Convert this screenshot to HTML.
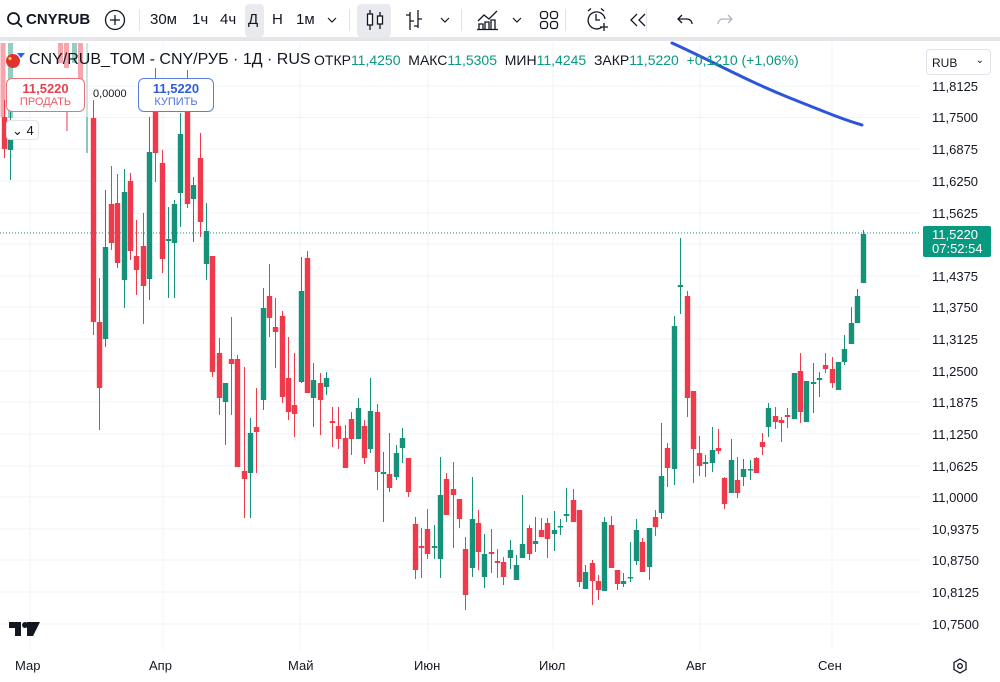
<!DOCTYPE html>
<html><head><meta charset="utf-8">
<style>
*{margin:0;padding:0;box-sizing:border-box}
body{width:1000px;height:682px;overflow:hidden;background:#fff;font-family:"Liberation Sans",sans-serif;color:#131722;position:relative}
.tb{position:absolute;left:0;top:0;width:1000px;height:41px;background:#fff;border-bottom:4px solid #e4e6ea}
.t{position:absolute;top:11px;font-size:15px;color:#131722}
.sep{position:absolute;top:9px;width:1px;height:22px;background:#e0e3eb}
.ax{position:absolute;left:932px;font-size:13px;color:#131722}
.mo{position:absolute;top:658px;font-size:13px;color:#131722}
.lg{position:absolute;top:52px;font-size:14px}
.gr{color:#089981}
</style></head><body>
<svg width="1000" height="682" style="position:absolute;left:0;top:0">
<g stroke="#f0f3fa" stroke-width="1">
<line x1="0" x2="920" y1="86" y2="86"/><line x1="0" x2="920" y1="117.5" y2="117.5"/><line x1="0" x2="920" y1="149" y2="149"/><line x1="0" x2="920" y1="181" y2="181"/><line x1="0" x2="920" y1="213" y2="213"/><line x1="0" x2="920" y1="244" y2="244"/><line x1="0" x2="920" y1="276" y2="276"/><line x1="0" x2="920" y1="307" y2="307"/><line x1="0" x2="920" y1="339" y2="339"/><line x1="0" x2="920" y1="371" y2="371"/><line x1="0" x2="920" y1="402" y2="402"/><line x1="0" x2="920" y1="434" y2="434"/><line x1="0" x2="920" y1="466" y2="466"/><line x1="0" x2="920" y1="497" y2="497"/><line x1="0" x2="920" y1="529" y2="529"/><line x1="0" x2="920" y1="560" y2="560"/><line x1="0" x2="920" y1="592" y2="592"/><line x1="0" x2="920" y1="624" y2="624"/>
<line x1="30" x2="30" y1="42" y2="650"/><line x1="163" x2="163" y1="42" y2="650"/><line x1="300" x2="300" y1="42" y2="650"/><line x1="428" x2="428" y1="42" y2="650"/><line x1="553" x2="553" y1="42" y2="650"/><line x1="700" x2="700" y1="42" y2="650"/><line x1="832" x2="832" y1="42" y2="650"/>
</g>
<line x1="0" x2="920" y1="233" y2="233" stroke="#089981" stroke-width="1" stroke-dasharray="1 2"/>
<path d="M672 43 C710 60 745 80 790 98 S845 120 862 125" fill="none" stroke="#2d55dc" stroke-width="3" stroke-linecap="round"/>
<g opacity=".45">
<rect x="0.5" y="43" width="5" height="74" fill="#ef3a4c"/>
<rect x="8" y="43" width="5" height="75" fill="#17927a"/>
<rect x="58" y="43" width="5" height="20" fill="#ef3a4c"/><rect x="64" y="43" width="5" height="25" fill="#ef3a4c"/>
<rect x="72" y="43" width="5" height="20" fill="#17927a"/><rect x="78" y="43" width="5" height="40" fill="#ef3a4c"/>
<line x1="87" x2="87" y1="43" y2="117" stroke="#17927a"/>
</g>
<line x1="67" x2="67" y1="110" y2="131" stroke="#ef3a4c"/>
<line x1="87" x2="87" y1="117" y2="153" stroke="#17927a"/>
</svg>
<svg width="1000" height="682" style="position:absolute;left:0;top:0" id="cs"></svg>
<script>
var d=[[4,117,149,100,158,0],[10,125,150,95,180,1],[93,118,322,100,335,0],[99,322,388,278,430,0],[105,247,339,190,347,1],[111,204,243,166,250,0],[117,203,263,174,268,0],[124,192,280,169,308,1],[130,181,251,173,260,0],[136,256,270,220,295,0],[143,246,286,213,324,0],[149,152,279,117,300,1],[155,100,153,68,182,0],[162,163,259,150,273,0],[168,239,241,207,298,1],[174,204,243,200,298,1],[180,134,193,113,227,1],[187,100,204,70,208,0],[193,185,199,177,242,1],[200,158,222,133,237,0],[206,231,264,203,280,1],[212,256,372,256,377,0],[219,353,398,338,415,0],[225,383,402,383,445,1],[231,359,364,317,415,0],[237,359,467,355,467,0],[244,471,479,367,518,0],[250,433,473,418,518,1],[256,427,432,388,473,0],[263,308,400,288,410,1],[269,296,318,264,337,0],[275,327,332,298,368,0],[282,316,397,311,403,0],[288,378,412,337,420,0],[294,405,414,353,437,0],[301,291,382,257,383,1],[307,258,393,251,393,0],[313,380,398,363,427,1],[320,383,400,373,435,0],[326,378,387,372,395,1],[332,421,423,407,447,0],[338,426,439,407,449,0],[345,438,468,425,468,0],[351,419,439,412,455,0],[358,408,439,398,439,1],[364,426,458,420,464,0],[370,411,449,378,453,1],[377,412,472,404,490,0],[383,472,474,452,522,1],[389,474,488,433,492,0],[396,453,477,445,480,1],[402,438,448,428,463,1],[408,458,492,458,497,0],[415,524,570,517,579,0],[421,546,548,528,578,0],[427,529,554,509,559,0],[434,546,548,525,559,1],[440,495,559,457,578,1],[446,479,515,473,515,0],[453,489,495,462,548,0],[459,499,519,499,528,0],[465,549,595,537,610,0],[472,519,568,477,577,1],[478,523,552,510,570,0],[484,554,577,534,588,1],[491,552,554,529,573,0],[497,561,563,549,578,0],[503,562,577,557,585,0],[510,550,558,540,569,1],[516,565,580,555,580,1],[522,544,558,495,558,1],[529,528,554,525,560,0],[535,541,544,517,552,1],[541,530,537,518,537,0],[547,523,539,518,558,0],[554,530,534,511,551,1],[560,526,527,519,535,1],[566,514,516,488,522,1],[573,500,522,489,522,0],[579,510,582,510,587,0],[585,572,589,565,589,1],[592,563,581,560,605,0],[598,581,590,575,600,0],[604,522,591,517,591,1],[611,525,568,516,568,0],[617,570,584,570,590,0],[623,581,584,573,587,1],[630,577,578,542,582,1],[636,530,561,519,565,1],[642,542,572,538,572,0],[649,528,567,528,580,1],[655,517,527,510,536,0],[661,476,513,423,519,1],[667,448,468,443,487,0],[674,326,469,316,485,1],[680,285,287,238,314,1],[687,296,398,291,417,0],[693,391,449,391,483,0],[699,453,466,436,476,0],[705,462,464,455,477,1],[712,450,463,427,472,1],[718,448,451,429,454,0],[724,478,504,477,509,0],[731,460,493,439,493,1],[737,480,493,457,498,0],[743,469,477,459,486,1],[750,469,470,460,480,1],[756,458,473,457,473,0],[762,442,447,433,455,0],[768,408,427,403,437,1],[775,416,422,407,429,0],[781,420,423,417,442,0],[787,415,417,408,428,0],[794,373,419,373,419,1],[800,371,412,353,423,0],[806,381,422,381,422,1],[813,382,384,363,413,1],[819,378,380,372,397,1],[825,365,369,353,373,0],[832,369,383,357,388,0],[838,362,390,362,390,1],[844,349,362,335,365,1],[851,323,344,307,344,1],[857,296,323,289,323,1],[863,234,283,230,283,1]];
var s='';d.forEach(function(c){var col=c[5]?'#17927a':'#ef3a4c';var h=Math.max(1.5,c[2]-c[1]);s+='<line x1="'+(c[0]+.5)+'" x2="'+(c[0]+.5)+'" y1="'+c[3]+'" y2="'+c[4]+'" stroke="'+col+'" stroke-width="1"/><rect x="'+(c[0]-2.2)+'" y="'+c[1]+'" width="5.4" height="'+h+'" fill="'+col+'"/>';});
document.getElementById('cs').innerHTML=s;
</script>

<div class="tb">
<svg width="18" height="18" style="position:absolute;left:6px;top:11px" viewBox="0 0 18 18"><circle cx="7.5" cy="7.5" r="5.5" fill="none" stroke="#131722" stroke-width="1.8"/><line x1="11.5" y1="11.5" x2="16" y2="16" stroke="#131722" stroke-width="1.8"/></svg>
<div class="t" style="left:26px;font-weight:bold;font-size:15px">CNYRUB</div>
<svg width="22" height="22" style="position:absolute;left:104px;top:9px"><circle cx="11" cy="11" r="9.5" fill="none" stroke="#131722" stroke-width="1.3"/><path d="M11 6v10M6 11h10" stroke="#131722" stroke-width="1.3"/></svg>
<div class="sep" style="left:139px"></div>
<div class="t" style="left:150px">30м</div>
<div class="t" style="left:192px">1ч</div>
<div class="t" style="left:220px">4ч</div>
<div style="position:absolute;left:245px;top:4px;width:19px;height:33px;background:#e8eaed;border-radius:4px"></div>
<div class="t" style="left:248px">Д</div>
<div class="t" style="left:272px">Н</div>
<div class="t" style="left:296px">1м</div>
<svg width="10" height="8" style="position:absolute;left:327px;top:16px"><path d="M1 2l4 4 4-4" fill="none" stroke="#131722" stroke-width="1.2"/></svg>
<div class="sep" style="left:349px"></div>
<div style="position:absolute;left:357px;top:4px;width:34px;height:33px;background:#e8eaed;border-radius:4px"></div>
<svg width="20" height="22" style="position:absolute;left:365px;top:9px"><path d="M5 1v20M15 3v17" stroke="#131722" stroke-width="1.3"/><rect x="2.5" y="5" width="5" height="11" fill="#fff" stroke="#131722" stroke-width="1.3"/><rect x="12.5" y="7" width="5" height="8" fill="#fff" stroke="#131722" stroke-width="1.3"/></svg>
<svg width="20" height="22" style="position:absolute;left:404px;top:9px"><path d="M6 3v18M6 6H2M6 12h4M14 1v18M14 10h4M14 17h-4" fill="none" stroke="#131722" stroke-width="1.3"/></svg>
<svg width="10" height="8" style="position:absolute;left:440px;top:16px"><path d="M1 2l4 4 4-4" fill="none" stroke="#131722" stroke-width="1.2"/></svg>
<div class="sep" style="left:461px"></div>
<svg width="24" height="22" style="position:absolute;left:476px;top:9px"><path d="M2 12l6-6 5 4 8-8" fill="none" stroke="#131722" stroke-width="1.3"/><path d="M3 20v-5h4v5M9 20v-7h4v7M15 20v-9h4v9M1 20.5h21" fill="none" stroke="#131722" stroke-width="1.3"/></svg>
<svg width="10" height="8" style="position:absolute;left:512px;top:16px"><path d="M1 2l4 4 4-4" fill="none" stroke="#131722" stroke-width="1.2"/></svg>
<svg width="20" height="20" style="position:absolute;left:539px;top:10px"><rect x="1.5" y="1.5" width="7" height="7" rx="2.5" fill="none" stroke="#131722" stroke-width="1.3"/><rect x="11.5" y="1.5" width="7" height="7" rx="2.5" fill="none" stroke="#131722" stroke-width="1.3"/><rect x="1.5" y="11.5" width="7" height="7" rx="2.5" fill="none" stroke="#131722" stroke-width="1.3"/><rect x="11.5" y="11.5" width="7" height="7" rx="2.5" fill="none" stroke="#131722" stroke-width="1.3"/></svg>
<div class="sep" style="left:565px"></div>
<svg width="24" height="26" style="position:absolute;left:585px;top:7px"><path d="M17 20A8.5 8.5 0 1 1 20 12" fill="none" stroke="#131722" stroke-width="1.3"/><path d="M11 7v6h4M3 4l3-2.5M19 4l-3-2.5M19 16v8M15 20h8" fill="none" stroke="#131722" stroke-width="1.3"/></svg>
<svg width="20" height="16" style="position:absolute;left:628px;top:12px"><path d="M9 2L3 8l6 6M17 2l-6 6 6 6" fill="none" stroke="#131722" stroke-width="1.3"/></svg>
<div class="sep" style="left:646px"></div>
<svg width="18" height="14" style="position:absolute;left:676px;top:13px"><path d="M6 2L2 6l4 4M2 6h9a5 5 0 0 1 5 5" fill="none" stroke="#131722" stroke-width="1.3"/></svg>
<svg width="18" height="14" style="position:absolute;left:716px;top:13px"><path d="M12 2l4 4-4 4M16 6H7a5 5 0 0 0-5 5" fill="none" stroke="#b2b5be" stroke-width="1.3"/></svg>
</div>

<svg width="22" height="18" style="position:absolute;left:4px;top:51px"><circle cx="9" cy="10" r="7" fill="#e0332d"/><circle cx="6" cy="7.5" r="1.5" fill="#ffdd33"/><path d="M13 2h8l-4 5z" fill="#2962ff"/></svg>
<div style="position:absolute;left:29px;top:51px;font-size:16px;color:#131722">CNY/RUB_TOM - CNY/РУБ · 1Д · RUS</div>
<div class="lg" style="left:314px">ОТКР<span class="gr">11,4250</span>&nbsp; МАКС<span class="gr">11,5305</span>&nbsp; МИН<span class="gr">11,4245</span>&nbsp; ЗАКР<span class="gr">11,5220</span>&nbsp; <span class="gr">+0,1210 (+1,06%)</span></div>

<div style="position:absolute;left:6px;top:78px;width:79px;height:34px;border:1px solid #e8707a;border-radius:6px;background:#fff;text-align:center;color:#e8404f">
<div style="font-size:13px;font-weight:bold;margin-top:2px">11,5220</div><div style="font-size:11px;opacity:.85">ПРОДАТЬ</div></div>
<div style="position:absolute;left:93px;top:88px;font-size:11px;color:#131722">0,0000</div>
<div style="position:absolute;left:138px;top:78px;width:76px;height:34px;border:1px solid #5a7fe0;border-radius:6px;background:#fff;text-align:center;color:#2f5ed6">
<div style="font-size:13px;font-weight:bold;margin-top:2px">11,5220</div><div style="font-size:11px;opacity:.85">КУПИТЬ</div></div>
<div style="position:absolute;left:6px;top:120px;width:33px;height:20px;border:1px solid #e0e3eb;border-radius:4px;background:#fff;font-size:13px;padding:2px 0 0 5px">⌄ 4</div>

<div style="position:absolute;left:926px;top:49px;width:65px;height:26px;border:1px solid #e0e3eb;border-radius:4px;background:#fff;font-size:12px;padding:6px 0 0 5px">RUB<span style="position:absolute;right:6px;top:5px;font-size:10px">⌄</span></div>
<div class="ax" style="top:79px">11,8125</div>
<div class="ax" style="top:110px">11,7500</div>
<div class="ax" style="top:142px">11,6875</div>
<div class="ax" style="top:174px">11,6250</div>
<div class="ax" style="top:206px">11,5625</div>
<div class="ax" style="top:269px">11,4375</div>
<div class="ax" style="top:300px">11,3750</div>
<div class="ax" style="top:332px">11,3125</div>
<div class="ax" style="top:364px">11,2500</div>
<div class="ax" style="top:395px">11,1875</div>
<div class="ax" style="top:427px">11,1250</div>
<div class="ax" style="top:459px">11,0625</div>
<div class="ax" style="top:490px">11,0000</div>
<div class="ax" style="top:522px">10,9375</div>
<div class="ax" style="top:553px">10,8750</div>
<div class="ax" style="top:585px">10,8125</div>
<div class="ax" style="top:617px">10,7500</div>
<div style="position:absolute;left:923px;top:226px;width:68px;height:31px;background:#089981;color:#fff;font-size:13px;line-height:14px;padding:2px 0 0 9px;border-radius:2px">11,5220<br>07:52:54</div>

<svg width="32" height="16" style="position:absolute;left:9px;top:622px"><path d="M0 0h12v14H6V6H0z M18 0h13L24 14h-6z" fill="#131722"/><circle cx="16" cy="3" r="3" fill="#131722"/></svg>
<div class="mo" style="left:15px">Мар</div>
<div class="mo" style="left:149px">Апр</div>
<div class="mo" style="left:288px">Май</div>
<div class="mo" style="left:414px">Июн</div>
<div class="mo" style="left:539px">Июл</div>
<div class="mo" style="left:686px">Авг</div>
<div class="mo" style="left:818px">Сен</div>
<svg width="16" height="16" style="position:absolute;left:952px;top:658px"><path d="M8 1l6 3.5v7L8 15l-6-3.5v-7z" fill="none" stroke="#131722" stroke-width="1.3"/><circle cx="8" cy="8" r="2.3" fill="none" stroke="#131722" stroke-width="1.3"/></svg>
</body></html>
